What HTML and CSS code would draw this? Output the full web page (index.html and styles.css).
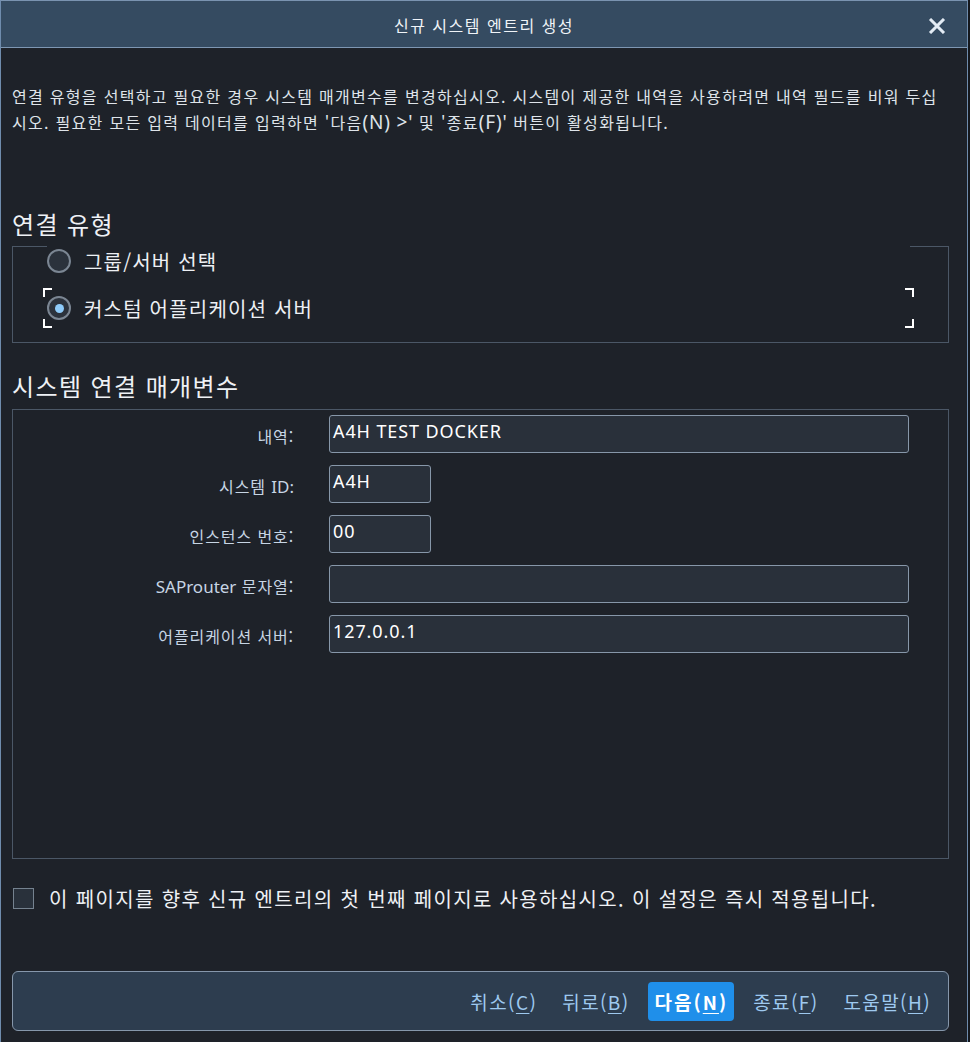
FILE: index.html
```html
<!DOCTYPE html>
<html lang="ko">
<head>
<meta charset="utf-8">
<title>신규 시스템 엔트리 생성</title>
<link rel="stylesheet" href="styles.css">
</head>
<body>
<div class="window">
  <div class="titlebar">
    <div class="title">신규 시스템 엔트리 생성</div>
    <div class="close">
      <svg width="18" height="16" viewBox="0 0 18 16"><path d="M2 1 L16 15 M16 1 L2 15" stroke="#e3ebf4" stroke-width="3" fill="none"/></svg>
    </div>
  </div>
  <div class="content">
    <p class="desc"><span class="line">연결 유형을 선택하고 필요한 경우 시스템 매개변수를 변경하십시오. 시스템이 제공한 내역을 사용하려면 내역 필드를 비워 두십</span><span class="line">시오. 필요한 모든 입력 데이터를 입력하면 '다음<span class="lat">(N) &gt;'</span> 및 '종료<span class="lat">(F)'</span> 버튼이 활성화됩니다.</span></p>

    <h2 class="heading h1">연결 유형</h2>
    <div class="group group-radio">
      <div class="radio-row first">
        <span class="radio"></span>
        <span class="radio-label">그룹/서버 선택</span>
      </div>
      <div class="radio-row focused">
        <span class="radio checked"></span>
        <span class="radio-label">커스텀 어플리케이션 서버</span>
        <span class="fc tl"></span><span class="fc bl"></span><span class="fc tr"></span><span class="fc br"></span>
      </div>
    </div>

    <h2 class="heading h2">시스템 연결 매개변수</h2>
    <div class="group group-params">
      <div class="field">
        <label class="flabel">내역:</label>
        <div class="input wide">A4H TEST DOCKER</div>
      </div>
      <div class="field">
        <label class="flabel">시스템 <span class="lat">ID:</span></label>
        <div class="input short">A4H</div>
      </div>
      <div class="field">
        <label class="flabel">인스턴스 번호:</label>
        <div class="input short">00</div>
      </div>
      <div class="field">
        <label class="flabel"><span class="lat">SAProuter</span> 문자열:</label>
        <div class="input wide"></div>
      </div>
      <div class="field">
        <label class="flabel">어플리케이션 서버:</label>
        <div class="input wide">127.0.0.1</div>
      </div>
    </div>

    <div class="check-row">
      <span class="checkbox"></span>
      <span class="check-label">이 페이지를 향후 신규 엔트리의 첫 번째 페이지로 사용하십시오. 이 설정은 즉시 적용됩니다.</span>
    </div>

    <div class="buttonbar">
      <span class="btn">취소(<u>C</u>)</span>
      <span class="btn">뒤로(<u>B</u>)</span>
      <span class="btn primary">다음(<u>N</u>)</span>
      <span class="btn">종료(<u>F</u>)</span>
      <span class="btn">도움말(<u>H</u>)</span>
    </div>
  </div>
</div>
</body>
</html>
```

FILE: styles.css
```css
* { box-sizing: border-box; }
html, body {
  margin: 0;
  padding: 0;
  background: #15181d;
  width: 970px;
  height: 1042px;
  overflow: hidden;
}
body {
  font-family: "Noto Sans", "Noto Sans CJK KR", sans-serif;
  color: #e6eaf0;
}
.window {
  width: 968px;
  height: 1042px;
  background: #1e2229;
  border-left: 1px solid #6f8cad;
  border-right: 1px solid #6f8cad;
  border-top: 1px solid #7a93b0;
  display: flex;
  flex-direction: column;
}
.titlebar {
  height: 47px;
  background: #354b61;
  border-bottom: 1px solid #7e97b3;
  display: flex;
  align-items: center;
  justify-content: center;
  position: relative;
  flex: none;
}
.title {
  font-family: "Noto Sans CJK KR", sans-serif;
  font-size: 16px;
  letter-spacing: 1.5px;
  color: #f0f4f8;
  margin-top: 2px;
}
.close {
  position: absolute;
  right: 21px;
  top: 17px;
  width: 18px;
  height: 16px;
  display: flex;
}
.content {
  padding: 0 19px 0 11px;
  display: flex;
  flex-direction: column;
}
.desc {
  margin: 35px 0 0 0;
  font-family: "Noto Sans CJK KR", sans-serif;
  font-size: 16px;
  letter-spacing: 1.3px;
  line-height: 26px;
  color: #dfe4ea;
}
.desc .line { display: block; white-space: nowrap; }
.desc .lat { font-family: "Noto Sans", sans-serif; font-size: 19px; letter-spacing: 0.8px; }
.heading {
  margin: 0;
  font-family: "Noto Sans CJK KR", sans-serif;
  font-weight: 400;
  font-size: 24px;
  letter-spacing: 1.4px;
  line-height: 28px;
  color: #eef1f5;
}
.h1 { margin-top: 75px; }
.h2 { margin-top: 29px; }
.group {
  border: 1px solid #4b5766;
  width: 937px;
  flex: none;
}
.group-radio {
  margin-top: 8px;
  height: 97px;
  padding: 0 38px 0 34px;
}
.radio-row {
  height: 40px;
  display: flex;
  align-items: center;
  background: #1e2229;
  position: relative;
}
.radio-row.first { margin-top: -6px; }
.radio-row.focused { margin-top: 7px; }
.radio {
  width: 24px;
  height: 24px;
  border-radius: 50%;
  border: 2px solid #7b8693;
  background: #2b323c;
  display: flex;
  align-items: center;
  justify-content: center;
  flex: none;
}
.radio.checked::after {
  content: "";
  width: 9px;
  height: 9px;
  border-radius: 50%;
  background: #8ecbfa;
}
.radio-label {
  margin-left: 13px;
  font-family: "Noto Sans CJK KR", sans-serif;
  font-size: 20px;
  letter-spacing: 1.2px;
  color: #edf0f4;
}
.fc {
  position: absolute;
  width: 9px;
  height: 9px;
  border-color: #ffffff;
  border-style: solid;
  border-width: 0;
}
.fc.tl { left: -4px; top: 0; border-left-width: 2px; border-top-width: 2px; }
.fc.bl { left: -4px; bottom: 0; border-left-width: 2px; border-bottom-width: 2px; }
.fc.tr { right: -4px; top: 0; border-right-width: 2px; border-top-width: 2px; }
.fc.br { right: -4px; bottom: 0; border-right-width: 2px; border-bottom-width: 2px; }

.group-params {
  margin-top: 9px;
  height: 450px;
  padding-top: 5px;
  display: flex;
  flex-direction: column;
  gap: 12px;
}
.field {
  display: flex;
  align-items: center;
  height: 38px;
}
.flabel {
  width: 281px;
  flex: none;
  text-align: right;
  font-family: "Noto Sans CJK KR", sans-serif;
  font-size: 16px;
  letter-spacing: 0.9px;
  color: #c7d5e4;
  margin-right: 35px;
  padding-top: 4px;
}
.flabel .lat { font-family: "Noto Sans", sans-serif; font-size: 17px; letter-spacing: 0; }
.input {
  height: 38px;
  flex: none;
  background: #29303a;
  border: 1px solid #8797a9;
  border-radius: 3px;
  font-family: "Noto Sans", sans-serif;
  font-size: 18px;
  letter-spacing: 0.9px;
  color: #ffffff;
  padding: 3px 0 0 3px;
  line-height: 24px;
}
.input.wide { width: 580px; }
.input.short { width: 102px; }

.check-row {
  margin-top: 28px;
  height: 22px;
  display: flex;
  align-items: center;
  padding-left: 1px;
}
.checkbox {
  width: 21px;
  height: 21px;
  background: #29313b;
  border: 1px solid #75828f;
  flex: none;
}
.check-label {
  margin-left: 15px;
  font-family: "Noto Sans CJK KR", sans-serif;
  font-size: 20px;
  letter-spacing: 1.35px;
  color: #eef1f5;
  white-space: nowrap;
}
.buttonbar {
  margin-top: 62px;
  width: 937px;
  height: 60px;
  flex: none;
  background: #2d3d4f;
  border: 1px solid #8697ab;
  border-radius: 6px;
  display: flex;
  justify-content: flex-end;
  align-items: center;
  gap: 12px;
  padding-right: 11px;
}
.btn {
  font-family: "Noto Sans CJK KR", sans-serif;
  font-size: 19px;
  letter-spacing: 1.4px;
  color: #9ec9ef;
  height: 39px;
  padding: 0 6px 0 7px;
  display: flex;
  align-items: center;
  border-radius: 4px;
}
.btn u { text-underline-offset: 3px; }
.btn.primary {
  background: #1f8fea;
  color: #ffffff;
  font-weight: 700;
  letter-spacing: 2px;
}
```
